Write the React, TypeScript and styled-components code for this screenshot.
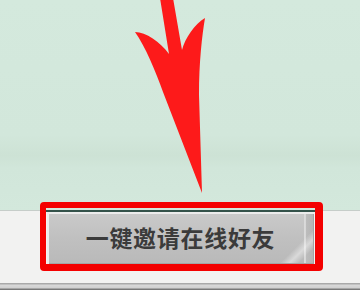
import styled, { createGlobalStyle } from 'styled-components'

const GlobalStyle = createGlobalStyle`
  html, body {
    margin: 0;
    padding: 0;
    width: 360px;
    height: 290px;
    overflow: hidden;
    background: #f1f1f0;
  }
`

const Page = styled.div`
  display: flex;
  flex-direction: column;
  width: 360px;
  height: 290px;
  font-family: 'Noto Sans CJK SC', 'Noto Sans', sans-serif;
`

const Scene = styled.div`
  height: 210px;
  flex-shrink: 0;
  background: linear-gradient(
    180deg,
    #d4e9dd 0%,
    #d2e7db 64%,
    #cde2d5 74%,
    #d1e6da 80%,
    #d3e8dc 100%
  );
`

const ArrowSvg = styled.svg`
  display: block;
  width: 360px;
  height: 210px;
`

const Footer = styled.div`
  flex: 1;
  display: flex;
  flex-direction: column;
  background: #f2f2f1;
  border-top: 1px solid #c6cdc9;
`

const ButtonRow = styled.div`
  display: flex;
  padding: 1px 0 0 47px;
  height: 71px;
`

const ButtonWrap = styled.div`
  position: relative;
  width: 267px;
  height: 52px;
`

const InviteButton = styled.button`
  width: 100%;
  height: 100%;
  border: none;
  padding: 0 0 3px;
  display: flex;
  align-items: center;
  justify-content: center;
  font-family: 'Noto Sans CJK SC', 'Noto Sans', sans-serif;
  font-size: 23px;
  font-weight: 700;
  letter-spacing: 0.7px;
  color: #3b3b3b;
  cursor: pointer;
  background:
    linear-gradient(135deg, transparent 89%, rgba(255, 255, 255, 0.45) 92%, transparent 95%),
    linear-gradient(90deg, transparent 96.2%, #dadada 96.2%, #dadada 96.8%, #bcbcbc 97%, #b4b4b4 100%),
    linear-gradient(180deg, #cacaca 0%, #c0c0c0 50%, #b9b9b9 100%);
  box-shadow:
    inset 2px 2px 0 #ececec,
    inset -1px -1px 0 #a4a4a4;
`

const Highlight = styled.div`
  position: absolute;
  top: -10px;
  left: -7px;
  right: -9px;
  bottom: -7px;
  border-style: solid;
  border-color: #f40000;
  border-width: 6px 8px 7px 6px;
  border-radius: 4px;
  pointer-events: none;

  &::before {
    content: '';
    position: absolute;
    top: 2px;
    left: 0;
    right: 0;
    height: 2px;
    background: #34524a;
  }
`

const BottomEdge = styled.div`
  height: 8px;
  background: linear-gradient(
    180deg,
    #a9a9a9 0,
    #a9a9a9 1px,
    #d9d9d9 2px,
    #cfcfcf 5px,
    #7d7d7d 6px,
    #6a6a6a 8px
  );
`

const Arrow = () => (
  <ArrowSvg viewBox="0 0 360 210">
    <path
      fill="#fd1a1a"
      d="M160 -2 L169 54 C160 42 146 32 135 32 C145 46 156 72 163 92 L202 193 L199 95 C199 62 202 36 205 18 C195 24 185 38 182 50 L173 -2 Z"
    />
  </ArrowSvg>
)

const App = () => {
  return (
    <>
      <GlobalStyle />
      <Page>
        <Scene>
          <Arrow />
        </Scene>
        <Footer>
          <ButtonRow>
            <ButtonWrap>
              <InviteButton>一键邀请在线好友</InviteButton>
              <Highlight />
            </ButtonWrap>
          </ButtonRow>
          <BottomEdge />
        </Footer>
      </Page>
    </>
  )
}

export default App
